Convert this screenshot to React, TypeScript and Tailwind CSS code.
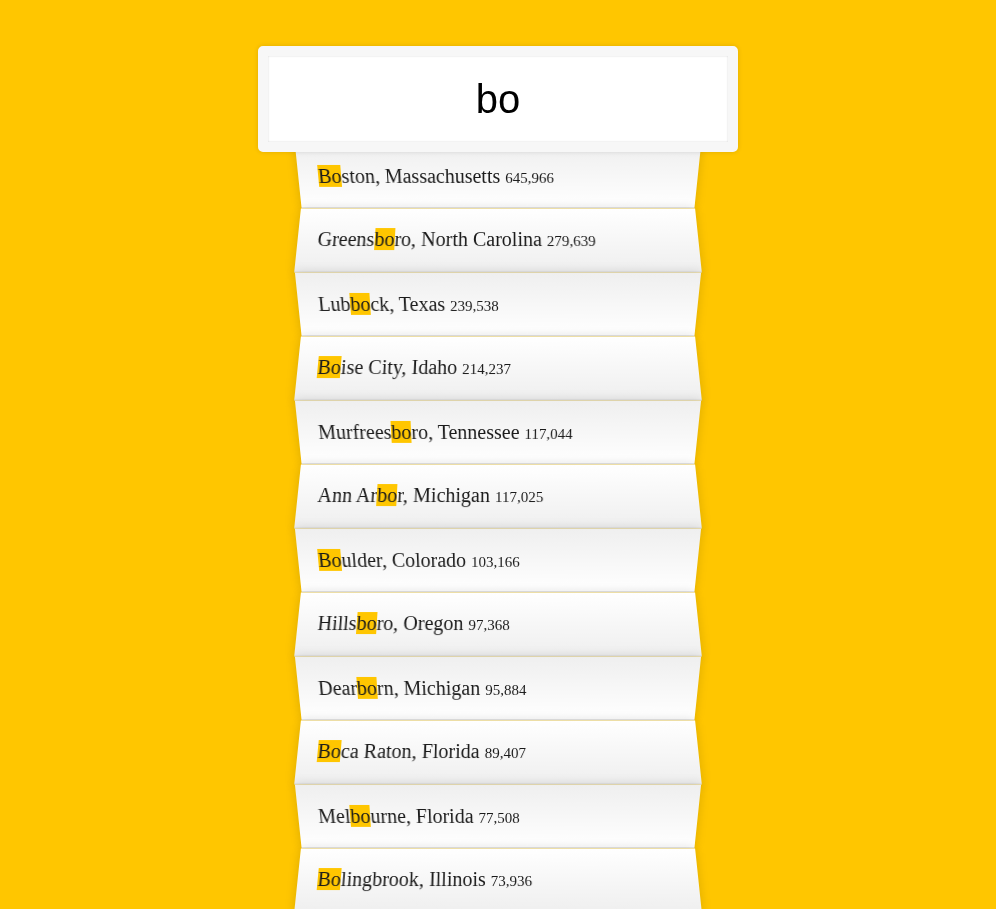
import { Fragment } from 'react'

type Place = { city: string; state: string; population: string }

const places: Place[] = [
  { city: 'Boston', state: 'Massachusetts', population: '645,966' },
  { city: 'Greensboro', state: 'North Carolina', population: '279,639' },
  { city: 'Lubbock', state: 'Texas', population: '239,538' },
  { city: 'Boise City', state: 'Idaho', population: '214,237' },
  { city: 'Murfreesboro', state: 'Tennessee', population: '117,044' },
  { city: 'Ann Arbor', state: 'Michigan', population: '117,025' },
  { city: 'Boulder', state: 'Colorado', population: '103,166' },
  { city: 'Hillsboro', state: 'Oregon', population: '97,368' },
  { city: 'Dearborn', state: 'Michigan', population: '95,884' },
  { city: 'Boca Raton', state: 'Florida', population: '89,407' },
  { city: 'Melbourne', state: 'Florida', population: '77,508' },
  { city: 'Bolingbrook', state: 'Illinois', population: '73,936' },
]

const query = 'bo'

function highlight(text: string) {
  const parts = text.split(new RegExp(`(${query})`, 'gi'))
  return parts.map((part, i) =>
    part.toLowerCase() === query ? (
      <span key={i} className="bg-[#ffc600]">
        {part}
      </span>
    ) : (
      <Fragment key={i}>{part}</Fragment>
    )
  )
}

export default function App() {
  return (
    <div className="min-h-screen bg-[#ffc600] font-['Liberation_Serif',serif] text-[20px] font-extralight">
      <form className="mx-auto max-w-[400px] pt-[36px] pb-[50px]">
        <input
          type="text"
          readOnly
          value={query}
          className="relative top-[10px] left-[-10%] z-10 m-0 h-[106px] w-[120%] rounded-[5px] border-[10px] border-[#f7f7f7] bg-white p-[20px] text-center font-['Liberation_Sans',Arial,sans-serif] text-[40px] leading-[46px] text-black shadow-[0_0_5px_rgba(0,0,0,0.12),inset_0_0_2px_rgba(0,0,0,0.19)] outline-none"
        />
        <ul className="relative m-0 p-0">
          {places.map((place) => (
            <li
              key={place.city}
              className="m-0 h-[64px] list-none border-b border-[#d8d8d8] px-[20px] pt-[20px] leading-[23px] text-[#1a1a1a] capitalize shadow-[0_0_10px_rgba(0,0,0,0.14)] odd:[transform:perspective(100px)_rotateX(-3deg)_translateY(3px)] odd:bg-[linear-gradient(to_top,#ffffff_0%,#efefef_100%)] even:[transform:perspective(100px)_rotateX(3deg)_translateY(2px)_scale(1.001)] even:bg-[linear-gradient(to_bottom,#ffffff_0%,#efefef_100%)]"
            >
              <span>
                {highlight(place.city)}, {highlight(place.state)}
              </span>{' '}
              <span className="text-[15px] leading-[17px]">{place.population}</span>
            </li>
          ))}
        </ul>
      </form>
    </div>
  )
}
